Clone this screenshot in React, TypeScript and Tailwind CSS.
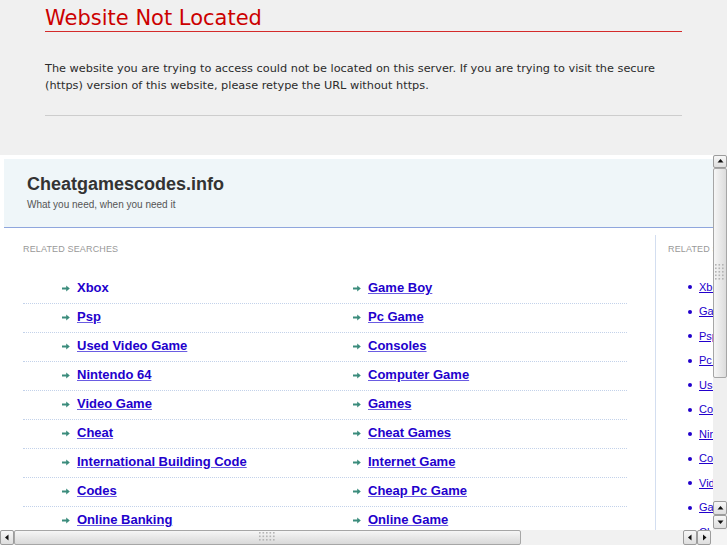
import React from "react";

const sans = "font-['Liberation_Sans',Arial,sans-serif]";

const rows: [string, string][] = [
    ["Xbox", "Game Boy"],
    ["Psp", "Pc Game"],
    ["Used Video Game", "Consoles"],
    ["Nintendo 64", "Computer Game"],
    ["Video Game", "Games"],
    ["Cheat", "Cheat Games"],
    ["International Building Code", "Internet Game"],
    ["Codes", "Cheap Pc Game"],
    ["Online Banking", "Online Game"],
    ["Cheat Codes", "Video Games"],
];

const side = [
    "Xbox", "Game Boy", "Psp", "Pc Game", "Used Video Game", "Consoles",
    "Nintendo 64", "Computer Game", "Video Game", "Games", "Cheat", "Cheat Games",
];

function Arrow() {
    return (
        <svg width="8" height="7" viewBox="0 0 8 7" className="shrink-0">
            <path d="M0 2.6h4.2V0.5L7.8 3.5 4.2 6.5V4.4H0z" fill="#3b8c7c" />
        </svg>
    );
}

const tri: Record<string, string> = {
    up: "1.5,5.5 4.5,2 7.5,5.5",
    down: "1.5,2.5 4.5,6 7.5,2.5",
    left: "5.5,1.5 2,4.5 5.5,7.5",
    right: "3,1.5 6.5,4.5 3,7.5",
};

function SbButton({ dir, className }: { dir: string; className: string }) {
    return (
        <div className={`flex items-center justify-center border border-[#9c9c9c] rounded-[2px] bg-linear-to-b from-[#f7f7f7] to-[#dedede] ${className}`}>
            <svg width="9" height="9" viewBox="0 0 9 9">
                <polygon points={tri[dir]} fill="#111" />
            </svg>
        </div>
    );
}

function Grip({ cols, rows: r }: { cols: number; rows: number }) {
    const dots = [];
    for (let i = 0; i < cols; i++)
        for (let j = 0; j < r; j++)
            dots.push(<rect key={`${i}-${j}`} x={i * 3.5} y={j * 3.5} width="1.6" height="1.6" fill="#b4b4b4" />);
    return (
        <svg width={cols * 3.5} height={r * 3.5}>
            {dots}
        </svg>
    );
}

export default function App() {
    return (
        <div className="w-[727px] h-[545px] overflow-hidden flex flex-col bg-white">
            <div className="h-[155px] shrink-0 bg-[#f0f0f0] px-[45px] font-['DejaVu_Sans',sans-serif]">
                <h1 className="pt-[6px] text-[21px] leading-[25px] text-[#cc0000]">Website Not Located</h1>
                <div className="h-[1px] bg-[#d42a2a]" />
                <p className="mt-[28px] text-[11.3px] leading-[17px] text-[#2b2b2b]">
                    The website you are trying to access could not be located on this server. If you are trying to visit the secure (https) version of this website, please retype the URL without https.
                </p>
                <div className="mt-[21px] h-[1px] bg-[#cdcdcd]" />
            </div>

            <div className="flex-1 flex flex-col min-h-0">
                <div className="flex-1 flex min-h-0">
                    <div className={`flex-1 overflow-hidden bg-white pt-[4px] pl-[4px] ${sans}`}>
                        <div className="w-[900px]">
                            <div className="h-[69px] bg-[#eff6f9] border-b border-[#8fa6dd] pl-[23px] pt-[15px]">
                                <div className="text-[18px] leading-[21px] font-bold text-[#333]">Cheatgamescodes.info</div>
                                <div className="mt-[4px] text-[10px] leading-[12px] text-[#555]">What you need, when you need it</div>
                            </div>
                            <div className="flex pt-[7px]">
                                <div className="w-[651px] shrink-0 pl-[19px] pt-[9px]">
                                    <div className="text-[9px] leading-[11px] tracking-[0.15px] text-[#999]">RELATED SEARCHES</div>
                                    <div className="mt-[20px] w-[604px]">
                                        {rows.map((pair, ri) => (
                                            <div key={ri} className="grid grid-cols-[291px_313px] h-[29px] border-b border-dotted border-[#c3d2ea]">
                                                {pair.map((label, ci) => (
                                                    <div key={ci} className="pl-[39px] pt-[6px]">
                                                        <div className="flex items-center h-[14px] gap-[7px]">
                                                            <Arrow />
                                                            <a className={`text-[13px] leading-[14px] font-bold text-[#2200cc] whitespace-nowrap ${ri === 0 && ci === 0 ? "no-underline" : "underline decoration-[#6a5ce2]"}`}>{label}</a>
                                                        </div>
                                                    </div>
                                                ))}
                                            </div>
                                        ))}
                                    </div>
                                </div>
                                <div className="flex-1 border-l border-[#d3def0] pl-[12px] pt-[9px]">
                                    <div className="text-[9px] leading-[11px] tracking-[0.15px] text-[#999]">RELATED SEARCHES</div>
                                    <ul className="mt-[20px]">
                                        {side.map((label) => (
                                            <li key={label} className="h-[24.5px] flex items-center">
                                                <span className="ml-[20px] w-[4px] h-[4px] rounded-full bg-[#2200cc]" />
                                                <a className="ml-[7px] text-[11px] leading-[13px] text-[#2200cc] underline whitespace-nowrap">{label}</a>
                                            </li>
                                        ))}
                                    </ul>
                                </div>
                            </div>
                        </div>
                    </div>

                    <div className="w-[14px] shrink-0 flex flex-col bg-[#efefef]">
                        <SbButton dir="up" className="h-[13px]" />
                        <div className="h-[210px] border border-[#a6a6a6] rounded-[2px] bg-linear-to-r from-[#f6f6f6] to-[#dcdcdc] flex items-center justify-center">
                            <Grip cols={3} rows={5} />
                        </div>
                        <div className="flex-1" />
                        <SbButton dir="up" className="h-[14px]" />
                        <SbButton dir="down" className="h-[14px]" />
                        <div className="h-[1px]" />
                    </div>
                </div>

                <div className="h-[15px] shrink-0 flex bg-[#f1f1f1]">
                    <SbButton dir="left" className="w-[14px]" />
                    <div className="w-[507px] border border-[#a6a6a6] rounded-[2px] bg-linear-to-b from-[#f6f6f6] to-[#d9d9d9] flex items-center justify-center">
                        <Grip cols={5} rows={3} />
                    </div>
                    <div className="flex-1" />
                    <SbButton dir="left" className="w-[14px]" />
                    <SbButton dir="right" className="w-[14px]" />
                    <div className="w-[16px] bg-[#f4f4f4]" />
                </div>
            </div>
        </div>
    );
}
